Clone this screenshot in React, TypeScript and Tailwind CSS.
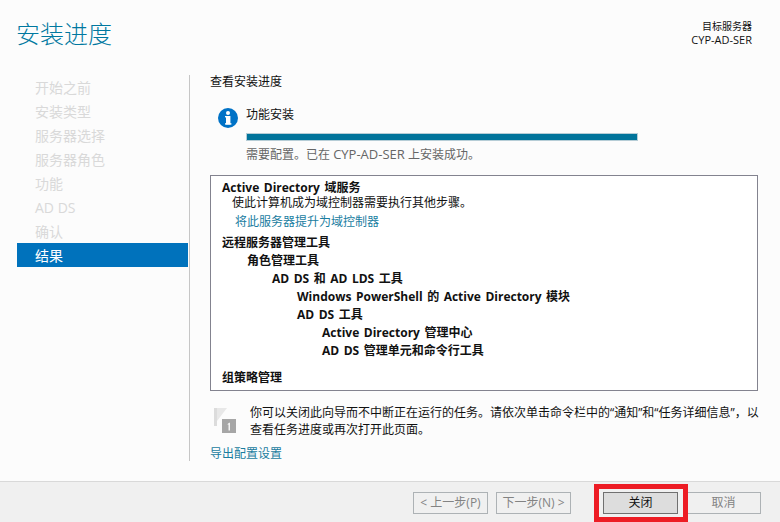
const font = { fontFamily: '"Open Sans", "Noto Sans CJK SC", sans-serif' };

const steps = ["开始之前", "安装类型", "服务器选择", "服务器角色", "功能", "AD DS", "确认"];

function Row({ indent, children, h }: { indent: string; children: React.ReactNode; h: string }) {
  return <div className={`${indent} ${h} flex items-center text-[12px] font-bold text-[#111] whitespace-pre [word-spacing:1.4px]`}>{children}</div>;
}

function Btn({ children, primary }: { children: React.ReactNode; primary?: boolean }) {
  return (
    <button
      className={
        primary
          ? "w-[75px] h-[22px] border border-[#707070] bg-[#dddddd] text-[12px] text-[#111] flex items-center justify-center"
          : "w-[75px] h-[22px] border border-[#adb2b5] bg-[#f0f0f0] text-[12px] text-[#838383] flex items-center justify-center"
      }
    >
      {children}
    </button>
  );
}

export default function App() {
  return (
    <div style={font} className="relative w-[780px] h-[522px] overflow-hidden bg-[#fcfcfc] flex flex-col">
      <div className="flex justify-between h-[75px] pl-[16px] pr-[28px]">
        <div className="text-[24px] leading-[32px] pt-[18px] font-light text-[#0078a0] box-content">安装进度</div>
        <div className="pt-[20px] text-right text-[10px] leading-[13px] text-[#111]">
          <div>目标服务器</div>
          <div className="text-[11px]">CYP-AD-SER</div>
        </div>
      </div>
      <div className="flex h-[406px] items-start">
        <div className="w-[172px] ml-[17px]">
          {steps.map((s) => (
            <div key={s} className="h-[24px] pl-[18px] flex items-center text-[14px] text-[#d9d9d9]">{s}</div>
          ))}
          <div className="w-[171px] h-[24px] pl-[18px] flex items-center text-[14px] text-white bg-[#0072bc]">结果</div>
        </div>
        <div className="w-px h-[386px] bg-[#c6c6c6]" />
        <div className="w-[570px] pl-[20px] flex flex-col">
          <div className="text-[12px] h-[14px] leading-[14px] text-[#111]">查看安装进度</div>
          <div className="flex mt-[18px] ml-[8px]">
            <svg width="20" height="20" viewBox="0 0 20 20" className="mt-px shrink-0">
              <circle cx="10" cy="10" r="10" fill="#0072c6" />
              <rect x="8" y="8" width="4.4" height="8.5" fill="#fff" />
              <rect x="7" y="8" width="3" height="1.4" fill="#fff" />
              <rect x="7" y="15.2" width="6.4" height="1.4" fill="#fff" />
              <circle cx="10" cy="5" r="2" fill="#fff" />
            </svg>
            <div className="ml-[8px] flex flex-col">
              <div className="text-[12px] leading-[16px] text-[#111]">功能安装</div>
              <div className="mt-[10px] w-[392px] h-[8px] border border-[#b6cdd6] bg-[#00749b]" />
              <div className="mt-[6px] h-[16px] text-[12px] leading-[16px] text-[#666]">需要配置。已在 <span className="text-[13px] leading-none">CYP-AD-SER</span> 上安装成功。</div>
            </div>
          </div>
          <div className="mt-[12px] w-[548px] h-[216px] border border-[#83838f] bg-white pl-[11px] pt-[4px]">
            <Row indent="" h="h-[15px]">Active Directory 域服务</Row>
            <div className="ml-[10px] h-[16px] flex items-center text-[12px] text-[#111]">使此计算机成为域控制器需要执行其他步骤。</div>
            <div className="ml-[13px] mt-[3px] h-[16px] flex items-center text-[12px] text-[#1a7d9f]">将此服务器提升为域控制器</div>
            <Row indent="mt-[4px]" h="h-[18px]">远程服务器管理工具</Row>
            <Row indent="ml-[25px]" h="h-[18px]">角色管理工具</Row>
            <Row indent="ml-[50px]" h="h-[18px]">AD DS 和 AD LDS 工具</Row>
            <Row indent="ml-[75px]" h="h-[18px]">Windows PowerShell 的 Active Directory 模块</Row>
            <Row indent="ml-[75px]" h="h-[18px]">AD DS 工具</Row>
            <Row indent="ml-[100px]" h="h-[18px]">Active Directory 管理中心</Row>
            <Row indent="ml-[100px]" h="h-[18px]">AD DS 管理单元和命令行工具</Row>
            <Row indent="mt-[9px]" h="h-[18px]">组策略管理</Row>
          </div>
          <div className="flex mt-[13px] ml-[4px]">
            <svg width="22" height="27" viewBox="0 0 22 27" className="mt-[3px] shrink-0">
              <rect x="0" y="1" width="3" height="18" fill="#dcdcdc" />
              <path d="M3 1H13L3 14Z" fill="#e8e8e8" />
              <rect x="8" y="12" width="14" height="14" fill="#a6a6a6" />
              <path d="M14 16.5L16 15.5V23.5H14.5V17.5L13.5 18Z" fill="#f4f4f4" />
            </svg>
            <div className="ml-[14px] w-[520px] text-[12px] leading-[17px] text-[#111]">
              你可以关闭此向导而不中断正在运行的任务。请依次单击命令栏中的“通知”和“任务详细信息”，以查看任务进度或再次打开此页面。
            </div>
          </div>
          <div className="mt-[8px] text-[12px] leading-[16px] text-[#1a7d9f]">导出配置设置</div>
        </div>
      </div>
      <div className="flex-1 bg-[#f0f0f0] border-t border-[#d9d9d9] flex items-start pt-[10px] pl-[413px]">
        <Btn>&lt; 上一步(P)</Btn>
        <div className="w-[8px]" />
        <Btn>下一步(N) &gt;</Btn>
        <div className="w-[32px]" />
        <Btn primary>关闭</Btn>
        <div className="w-[8px]" />
        <Btn>取消</Btn>
      </div>
      <div className="absolute left-[594px] top-[484px] w-[94px] h-[38px] border-[5px] border-[#ed1c24]" />
    </div>
  );
}
